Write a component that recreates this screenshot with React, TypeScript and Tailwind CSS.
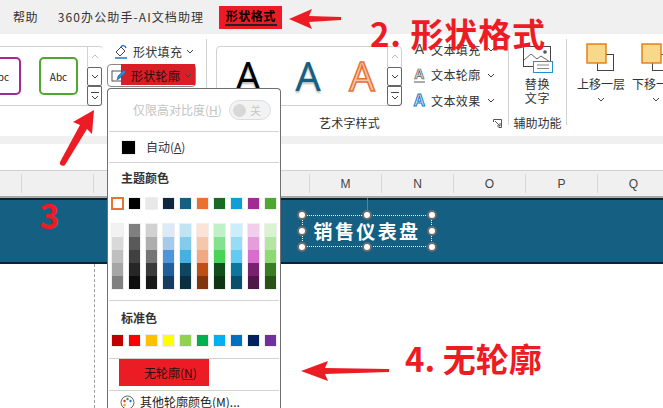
const themeTop = [
  'bg-[#ffffff] outline outline-2 -outline-offset-2 outline-[#e97132]',
  'bg-[#000000]', 'bg-[#e8e8e8]', 'bg-[#0e2841]', 'bg-[#156082]',
  'bg-[#e97132]', 'bg-[#196b24]', 'bg-[#0f9ed5]', 'bg-[#a02b93]', 'bg-[#4ea72e]',
];

const themeShades = [
  ['bg-[#f2f2f2]', 'bg-[#d9d9d9]', 'bg-[#bfbfbf]', 'bg-[#a6a6a6]', 'bg-[#808080]'],
  ['bg-[#7f7f7f]', 'bg-[#595959]', 'bg-[#404040]', 'bg-[#262626]', 'bg-[#0d0d0d]'],
  ['bg-[#d1d1d1]', 'bg-[#aeaeae]', 'bg-[#757575]', 'bg-[#3a3a3a]', 'bg-[#171717]'],
  ['bg-[#dceaf7]', 'bg-[#a6caec]', 'bg-[#4e95d9]', 'bg-[#215f9a]', 'bg-[#153d64]'],
  ['bg-[#c1e4f5]', 'bg-[#83cbeb]', 'bg-[#45b0e1]', 'bg-[#0f4761]', 'bg-[#0a2f41]'],
  ['bg-[#fbe3d6]', 'bg-[#f6c6ad]', 'bg-[#f1a983]', 'bg-[#c04f15]', 'bg-[#80350e]'],
  ['bg-[#c1f0c8]', 'bg-[#83e28e]', 'bg-[#47d459]', 'bg-[#104f1a]', 'bg-[#0d3512]'],
  ['bg-[#caeefb]', 'bg-[#95dcf7]', 'bg-[#61cbf3]', 'bg-[#0b76a0]', 'bg-[#074f6a]'],
  ['bg-[#f2ceed]', 'bg-[#e59edc]', 'bg-[#d86dcd]', 'bg-[#782170]', 'bg-[#501549]'],
  ['bg-[#d9f2d0]', 'bg-[#b4e5a2]', 'bg-[#8ed973]', 'bg-[#3a7c22]', 'bg-[#275317]'],
];

const standard = [
  'bg-[#c00000]', 'bg-[#ff0000]', 'bg-[#ffc000]', 'bg-[#ffff00]', 'bg-[#92d050]',
  'bg-[#00b050]', 'bg-[#00b0f0]', 'bg-[#0070c0]', 'bg-[#002060]', 'bg-[#7030a0]',
];

const columns = [
  { label: '', w: 'w-[22px]' },
  { label: '', w: 'w-[72px]' },
  { label: 'I', w: 'w-[72px]' },
  { label: '', w: 'w-[72px]' },
  { label: '', w: 'w-[72px]' },
  { label: 'M', w: 'w-[72px]' },
  { label: 'N', w: 'w-[72px]' },
  { label: 'O', w: 'w-[72px]' },
  { label: 'P', w: 'w-[72px]' },
  { label: 'Q', w: 'w-[72px]' },
];

function Chevron({ className = '' }: { className?: string }) {
  return (
    <svg width="8" height="5" viewBox="0 0 8 5" className={className} fill="none" stroke="#444" strokeWidth="1">
      <path d="M1 1l3 3 3-3" />
    </svg>
  );
}

function GalleryScroll() {
  return (
    <div className="flex flex-col w-[15px] h-[60px] shrink-0">
      <div className="h-[21px] border-l border-[#d0d0d0] flex items-center justify-center">
        <svg width="8" height="5" viewBox="0 0 8 5" fill="none" stroke="#bbb"><path d="M1 4l3-3 3 3" /></svg>
      </div>
      <div className="h-[19px] border border-[#666] rounded-[2px] flex items-center justify-center">
        <Chevron />
      </div>
      <div className="h-[20px] border border-[#666] rounded-b-[3px] flex flex-col items-center justify-center">
        <div className="w-[8px] h-px bg-[#444] mb-[2px]" />
        <Chevron />
      </div>
    </div>
  );
}

function MenuSep() {
  return <div className="h-px bg-[#d2d2d2] mx-px shrink-0" />;
}

function Handle({ className }: { className: string }) {
  return <div className={`absolute w-[10px] h-[10px] rounded-full bg-white border-2 border-[#6b6b6b] ${className}`} />;
}

function WordArtRow({ icon, label }: { icon: React.ReactNode; label: string }) {
  return (
    <div className="h-[25.5px] shrink-0 flex items-center gap-[3px] text-[12px] text-[#333] tracking-[0.4px]">
      <span className="w-[17px] flex justify-center">{icon}</span>
      <span>{label}</span>
      <Chevron className="ml-[3px]" />
    </div>
  );
}

function Toggle() {
  return (
    <div className="w-[42px] h-[20px] rounded-full border border-[#dcdcdc] bg-[#f3f3f3] flex items-center pl-[3px] gap-[4px]">
      <div className="w-[13px] h-[13px] rounded-full bg-[#d8d8d8]" />
      <span className="text-[11px] text-[#c8c8c8]">关</span>
    </div>
  );
}

function ColorMenu() {
  return (
    <div className="absolute left-[107px] top-[88px] w-[174px] h-[320px] overflow-hidden bg-white border-x border-t border-[#6f6f6f] rounded-t-[4px] flex flex-col text-[12px] text-[#333]">
      <div className="h-[42px] shrink-0 flex items-center pl-[25px] gap-[7px] text-[#c4c4c4]">
        <span>仅限高对比度(<u>H</u>)</span>
        <Toggle />
      </div>
      <MenuSep />
      <div className="h-[30px] shrink-0 flex items-center pl-[13px] gap-[10px]">
        <div className="w-[15px] h-[15px] bg-black border border-[#eee]" />
        <span>自动(<u>A</u>)</span>
      </div>
      <MenuSep />
      <div className="h-[29px] shrink-0 flex items-center pl-[13px] font-bold">主题颜色</div>
      <div className="flex gap-[4px] pl-[3px] mt-[5px] shrink-0">
        {themeTop.map((c, i) => (
          <div key={i} className={`w-[13px] h-[13px] border border-[#eee] ${c}`} />
        ))}
      </div>
      <div className="flex gap-[4px] pl-[3px] mt-[13px] shrink-0">
        {themeShades.map((col, i) => (
          <div key={i} className="flex flex-col border border-[#eee]">
            {col.map((c, j) => (
              <div key={j} className={`w-[11px] h-[13px] ${c}`} />
            ))}
          </div>
        ))}
      </div>
      <div className="mt-[10px]"><MenuSep /></div>
      <div className="h-[33px] shrink-0 flex items-center pl-[13px] font-bold">标准色</div>
      <div className="flex gap-[4px] pl-[3px] shrink-0">
        {standard.map((c, i) => (
          <div key={i} className={`w-[13px] h-[13px] border border-[#eee] ${c}`} />
        ))}
      </div>
      <div className="mt-[11px]"><MenuSep /></div>
      <div className="ml-[11px] w-[90px] h-[27px] shrink-0 bg-[#ed1c24] flex items-center pl-[2px] gap-[8px] text-[#2b1011]">
        <div className="w-[15px] h-[15px] border border-[#d4252c]" />
        <span>无轮廓(<u>N</u>)</span>
      </div>
      <div className="mt-[4px]"><MenuSep /></div>
      <div className="flex items-center pl-[12px] gap-[5px] h-[22px] shrink-0">
        <svg width="15" height="15" viewBox="0 0 15 15">
          <circle cx="7.5" cy="7.5" r="6.5" fill="#fff" stroke="#666" />
          <circle cx="4.5" cy="6" r="1.2" fill="#e03030" />
          <circle cx="7.5" cy="4" r="1.2" fill="#2f9e44" />
          <circle cx="10.5" cy="6" r="1.2" fill="#1c7ed6" />
          <circle cx="4.5" cy="10" r="1.2" fill="#f2a20c" />
        </svg>
        <span className="text-[#222]">其他轮廓颜色(<u>M</u>)...</span>
      </div>
    </div>
  );
}

function Annotations() {
  return (
    <>
      <span className="absolute left-[370px] top-[11px] text-[33px] leading-[44px] font-bold text-[#ed1c24] tracking-[0.9px]">2. 形状格式</span>
      <span className="absolute left-[39px] top-[192px] text-[35px] leading-[44px] font-bold text-[#ed1c24]">3</span>
      <span className="absolute left-[405px] top-[337px] text-[33px] leading-[42px] font-bold text-[#ed1c24]">4. 无轮廓</span>
      <svg className="absolute left-[288px] top-[7px]" width="54" height="24" viewBox="0 0 54 24" fill="#ed1c24">
        <path d="M1 12L24 2l-3 7 32 1v3l-32 2 3 7z" />
      </svg>
      <svg className="absolute left-[56px] top-[108px]" width="44" height="60" viewBox="0 0 44 60" fill="#ed1c24">
        <path d="M38 2l-2 24-5-5L9 57c-2 2-6 0-5-3l20-37-7-3z" />
      </svg>
      <svg className="absolute left-[300px] top-[359px]" width="90" height="24" viewBox="0 0 90 24" fill="#ed1c24">
        <path d="M1 12L28 2l-3 7 64 1v3l-64 2 3 7z" />
      </svg>
    </>
  );
}

export default function App() {
  return (
    <div className="relative w-[663px] h-[408px] overflow-hidden bg-white font-['Noto_Sans_CJK_SC','Noto_Sans',sans-serif]">
      {/* tabs */}
      <div className="h-[34px] bg-[#f0f0f0] flex items-center pl-[13px] text-[12px] text-[#333]">
        <span className="tracking-[0.4px]">帮助</span>
        <span className="ml-[20px] tracking-[1.1px]">360办公助手-AI文档助理</span>
        <div className="ml-[15px] w-[63px] h-[23px] bg-[#ed1c24] text-black font-bold flex flex-col items-center justify-center tracking-[0.5px]">
          <span className="leading-[16px]">形状格式</span>
          <div className="w-[52px] h-[2px] bg-[#222]" />
        </div>
      </div>

      {/* ribbon */}
      <div className="h-[102px] bg-white flex overflow-hidden">
        {/* shape styles */}
        <div className="w-[103px] shrink-0 pt-[12px]">
          <div className="h-[60px] flex items-center border-y border-[#d0d0d0] rounded-r-[4px]">
            <div className="w-[22px] h-[38px] -ml-[1px] border-2 border-l-0 border-[#a02b93] rounded-r-[5px] text-[10px] flex items-center justify-end pr-[10px] text-[#222] overflow-hidden shrink-0">bc</div>
            <div className="ml-[18px] w-[39px] h-[38px] border-2 border-[#4ea72e] rounded-[5px] text-[10px] flex items-center justify-center text-[#222] shrink-0">Abc</div>
            <div className="ml-[9px]"><GalleryScroll /></div>
          </div>
        </div>
        <div className="w-[103px] shrink-0 pl-[4px] pt-[6px] text-[12px] text-[#333] tracking-[0.3px]">
          <div className="h-[23px] flex items-center pl-[6px] gap-[4px]">
            <svg width="16" height="16" viewBox="0 0 16 16" fill="none" stroke="#444">
              <path d="M3 8l5-5 4 4-5 5z" />
              <path d="M8 3c1-2 4-2 5 1" stroke="#1f77c9" strokeWidth="1.5" />
              <path d="M2 14h12" stroke="#1f77c9" strokeWidth="1.5" />
            </svg>
            <span>形状填充</span>
            <Chevron />
          </div>
          <div className="relative w-[89px] h-[23px] mt-[1px] border border-[#888] rounded-[4px] flex items-center pl-[3px] gap-[4px]">
            <div className="absolute left-[13px] -top-px w-[74px] h-[21px] bg-[#d91e27]" />
            <svg className="relative" width="16" height="16" viewBox="0 0 16 16" fill="none">
              <rect x="1" y="3" width="10" height="10" stroke="#555" />
              <path d="M6 12l1-4 6-6 2 2-6 6z" fill="#2f86d6" stroke="#1c5f9e" strokeWidth="0.6" />
            </svg>
            <span className="relative text-[#2b0b0c]">形状轮廓</span>
            <Chevron className="relative" />
          </div>
        </div>
        <div className="w-px h-[86px] mt-[5px] bg-[#d2d2d2] shrink-0" />

        {/* word art */}
        <div className="w-[301px] shrink-0 pl-[9px]">
          <div className="flex h-[60px] mt-[12px]">
            <div className="w-[186px] h-[60px] border border-[#d0d0d0] rounded-[4px] flex items-center shrink-0">
              <div className="flex flex-1 items-center font-['Noto_Sans',sans-serif] text-[40px] leading-[44px]">
                <span className="w-[62px] text-center text-black [text-shadow:0_2px_2px_#bbb]">A</span>
                <span className="w-[58px] text-center text-[#156082] [text-shadow:0_2px_2px_#bbb]">A</span>
                <span className="w-[50px] text-center text-[#f6c6ad] [-webkit-text-stroke:1.5px_#e97132]">A</span>
              </div>
              <GalleryScroll />
            </div>
            <div className="ml-[9px] -mt-[9px] flex flex-col">
              <WordArtRow label="文本填充" icon={<span className="font-['Liberation_Sans',sans-serif] text-[14px] text-[#444]">A</span>} />
              <WordArtRow label="文本轮廓" icon={<span className="font-['Liberation_Sans',sans-serif] text-[14px] font-bold leading-[14px] text-[#ddd] [-webkit-text-stroke:0.7px_#555] border-b-2 border-[#aaa]">A</span>} />
              <WordArtRow label="文本效果" icon={<span className="font-['Liberation_Sans',sans-serif] text-[16px] font-bold text-[#dff0fb] [-webkit-text-stroke:1px_#1f77c9]">A</span>} />
            </div>
          </div>
          <div className="flex mt-[8px] items-center text-[12px] text-[#333] tracking-[0.2px]">
            <span className="ml-[103px] leading-[18px]">艺术字样式</span>
            <svg className="ml-[113px]" width="9" height="9" viewBox="0 0 9 9" fill="none" stroke="#555">
              <path d="M.5 3V.5H8.5V8.5H5.5M2 2l5 5M7 4v3H4" />
            </svg>
          </div>
        </div>
        <div className="w-px h-[86px] mt-[5px] bg-[#d2d2d2] shrink-0" />

        {/* accessibility */}
        <div className="w-[57px] shrink-0 flex flex-col items-center pt-[12px] text-[12px] text-[#333]">
          <svg width="30" height="28" viewBox="0 0 30 28" fill="none">
            <rect x=".5" y=".5" width="27" height="20" stroke="#444" fill="#fff" />
            <path d="M1 14l7-6 6 5 4-3 9 6" stroke="#666" />
            <circle cx="22" cy="6" r="1.8" fill="#555" />
            <rect x="10.5" y="15.5" width="19" height="11" fill="#fff" stroke="#1f8fd6" />
            <path d="M14 19h12M14 22.5h12" stroke="#888" />
          </svg>
          <span className="mt-[3px] leading-[14px] tracking-[0.8px]">替换</span>
          <span className="leading-[14px] tracking-[0.8px]">文字</span>
          <span className="mt-[10px] leading-[16px] whitespace-nowrap">辅助功能</span>
        </div>
        <div className="w-px h-[86px] mt-[5px] bg-[#d2d2d2] shrink-0" />

        {/* arrange */}
        <div className="flex pl-[9px] gap-[5px] pt-[9px] text-[12px] text-[#333] whitespace-nowrap">
          {['上移一层', '下移一层'].map((t) => (
            <div key={t} className="flex flex-col items-center w-[50px]">
              <svg width="30" height="28" viewBox="0 0 30 28" fill="none">
                <rect x="11.5" y="11.5" width="16" height="16" fill="#fff" stroke="#444" />
                <rect x="1" y="1" width="19" height="19" fill="#f8d98c" stroke="#e07b10" strokeWidth="1.4" />
              </svg>
              <span className="mt-[5px] leading-[16px]">{t}</span>
              <Chevron className="mt-[5px]" />
            </div>
          ))}
        </div>
      </div>

      {/* sheet */}
      <div className="h-[8px] bg-[#f0f0f0]" />
      <div className="h-[27px] bg-white border-b border-[#d0d0d0]" />
      <div className="h-[27px] bg-[#f0f0f0] flex border-b-2 border-[#a8a8a8] text-[12px] text-[#444] font-['Liberation_Sans',sans-serif]">
        {columns.map((c, i) => (
          <div key={i} className={`${c.w} shrink-0 border-r border-[#d8d8d8] my-[3px] flex items-center justify-center`}>
            {c.label}
          </div>
        ))}
      </div>
      <div className="relative h-[66px] bg-[#156082] border-y-2 border-[#0a2433]">
        <div className="absolute left-[302px] top-[15px] w-[130px] h-[32px] border-t border-white border-b border-dotted border-x-0" />
        <div className="absolute left-[302px] top-[15px] w-[130px] h-[32px] border-x border-dotted border-white flex items-center justify-center text-[19px] font-bold text-white tracking-[2.4px] whitespace-nowrap">
          销售仪表盘
        </div>
        <div className="absolute left-[367px] -top-[2px] w-px h-[17px] bg-[#777]" />
        <Handle className="left-[297px] top-[10px]" />
        <Handle className="left-[362px] top-[10px]" />
        <Handle className="left-[427px] top-[10px]" />
        <Handle className="left-[297px] top-[26px]" />
        <Handle className="left-[427px] top-[26px]" />
        <Handle className="left-[297px] top-[42px]" />
        <Handle className="left-[362px] top-[42px]" />
        <Handle className="left-[427px] top-[42px]" />
      </div>
      <div className="ml-[94px] h-[144px] border-l border-dashed border-[#a0a0a0]" />

      <ColorMenu />
      <Annotations />
    </div>
  );
}
